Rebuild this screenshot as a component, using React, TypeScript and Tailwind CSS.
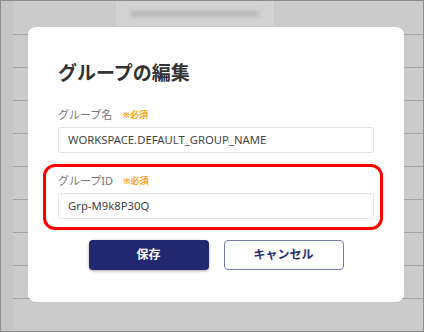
import React from 'react';

const rows = Array.from({ length: 9 });

const Field: React.FC<{ label: string; value: string }> = ({ label, value }) => (
  <div>
    <div className="flex items-center h-[16px] gap-[10px]">
      <span className="text-[11px] text-[#777]">{label}</span>
      <span className="text-[9px] font-bold text-[#f5a623]">※必須</span>
    </div>
    <div className="mt-[4px] h-[26px] flex items-center px-[9px] border border-[#e4e4e4] rounded-[3px] text-[11.3px] text-[#444]">
      {value}
    </div>
  </div>
);

export default function App() {
  return (
    <div className="relative w-[424px] h-[332px] overflow-hidden border border-[#8c8c8c] bg-[#cbcbcb] font-['Noto_Sans','Noto_Sans_CJK_JP',sans-serif]">
      {/* page behind the overlay */}
      <div className="flex h-full">
        <div className="w-[12px] bg-[#c5c5c5]" />
        <div className="flex-1 flex flex-col">
          <div className="h-[33px] flex justify-center">
            <div className="ml-[-46px] w-[158px] h-[25px] bg-[#d3d3d3] flex items-center justify-center">
              <div className="w-[130px] h-[6px] rounded-full bg-[#b8b8b8] blur-[2px]" />
            </div>
          </div>
          {rows.map((_, i) => (
            <div key={i} className="h-[33px] border-t border-[#a3a3a3]" />
          ))}
        </div>
      </div>

      {/* dialog */}
      <div className="absolute left-[27px] top-[26px] w-[376px] h-[275px] rounded-[8px] bg-white px-[30px] pt-[32px]">
        <h2 className="h-[28px] leading-[28px] text-[19px] font-bold text-[#333]">グループの編集</h2>

        <div className="mt-[20px]">
          <Field label="グループ名" value="WORKSPACE.DEFAULT_GROUP_NAME" />
        </div>

        <div className="mt-[11px] -ml-[15px] -mr-[9px] pl-[12px] pr-[6px] pt-[6px] pb-[8px] border-[3px] border-[#ff0000] rounded-[12px]">
          <Field label="グループID" value="Grp-M9k8P30Q" />
        </div>

        <div className="mt-[10px] flex justify-center gap-[15px]">
          <button className="w-[120px] h-[30px] rounded-[4px] bg-[#22286f] text-white text-[12px] font-bold shadow-[0_1px_3px_rgba(0,0,0,0.35)]">
            保存
          </button>
          <button className="w-[120px] h-[30px] rounded-[4px] bg-white border border-[#7479b0] text-[#2a2f72] text-[12px] font-bold">
            キャンセル
          </button>
        </div>
      </div>
    </div>
  );
}
